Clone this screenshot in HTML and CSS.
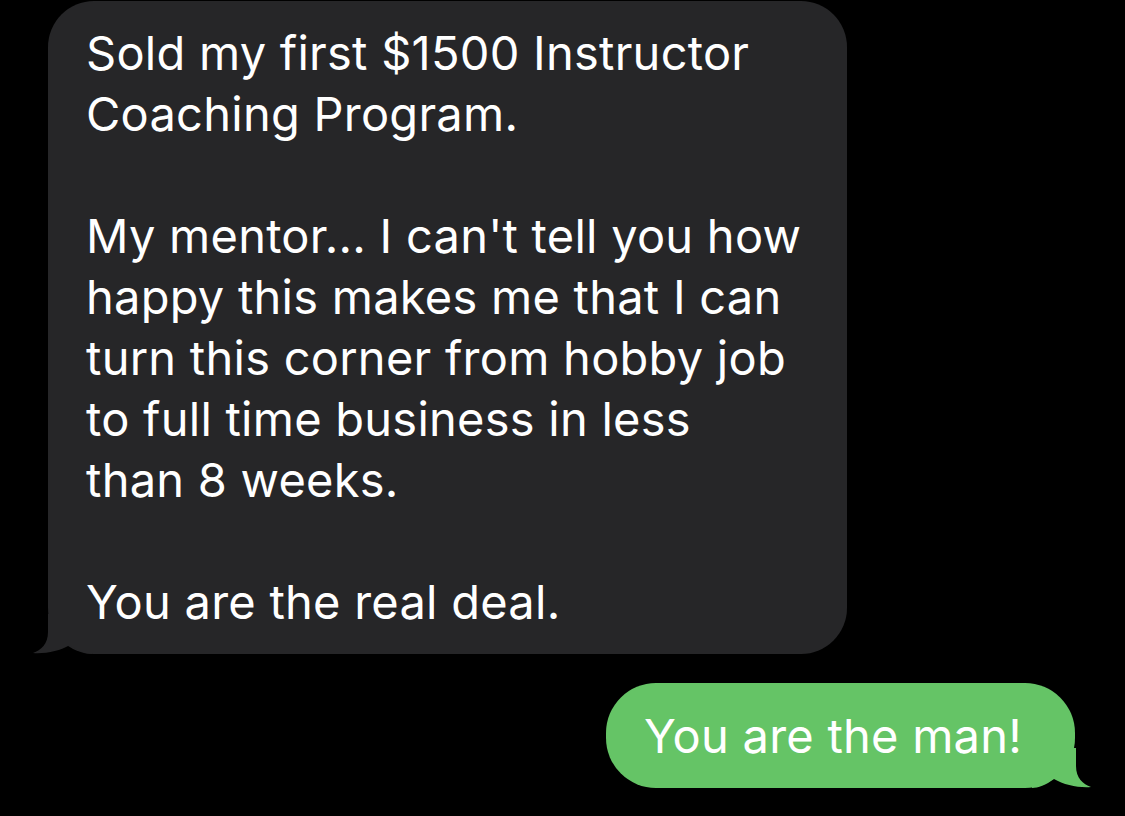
FILE: index.html
```html
<!DOCTYPE html>
<html>
<head>
<meta charset="utf-8">
<link rel="stylesheet" href="styles.css">
</head>
<body>
<div class="thread">
  <div class="bubble received">
    <p>Sold my first $1500 Instructor<br>Coaching Program.</p>
    <p>My mentor... I can't tell you how<br>happy this makes me that I can<br>turn this corner from hobby job<br>to full time business in less<br>than 8 weeks.</p>
    <p>You are the real deal.</p>
    <svg class="tail tail-left" width="60" height="40" viewBox="0 0 60 40"><path d="M16 0 L16 18 C16 30 9 36 1 39 C13 40 28 37 38 31 C46 37 54 40 60 40 L60 0 Z"/></svg>
  </div>
  <div class="bubble sent">
    <p>You are the man!</p>
    <svg class="tail tail-right" width="60" height="40" viewBox="0 0 60 40"><path d="M16 0 L16 18 C16 30 9 36 1 39 C13 40 28 37 38 31 C46 37 54 40 60 40 L60 0 Z"/></svg>
  </div>
</div>
</body>
</html>
```
FILE: styles.css
```css
html, body {
  margin: 0;
  padding: 0;
  background: #000;
}
body {
  width: 1125px;
  height: 816px;
  overflow: hidden;
  font-family: Inter, "Liberation Sans", Arial, sans-serif;
  font-size: 47px;
  line-height: 61px;
  letter-spacing: 0.25px;
  color: #fff;
}
.thread {
  display: flex;
  flex-direction: column;
}
.bubble {
  position: relative;
  box-sizing: border-box;
}
.bubble p {
  margin: 0;
}
.bubble p + p {
  margin-top: 61px;
}
.received {
  margin-left: 48px;
  margin-top: 1px;
  width: 799px;
  height: 653px;
  padding: 21px 20px 0 38px;
  background: #262628;
  border-radius: 46px;
}
.sent {
  align-self: flex-end;
  margin-right: 50px;
  margin-top: 29px;
  width: 469px;
  height: 105px;
  padding: 22px 0 0 38px;
  background: #65c466;
  border-radius: 50px;
}
.tail {
  position: absolute;
  bottom: 0;
}
.tail-left {
  left: -16px;
  fill: #262628;
}
.tail-right {
  right: -17px;
  transform: scaleX(-1);
  fill: #65c466;
}
```
